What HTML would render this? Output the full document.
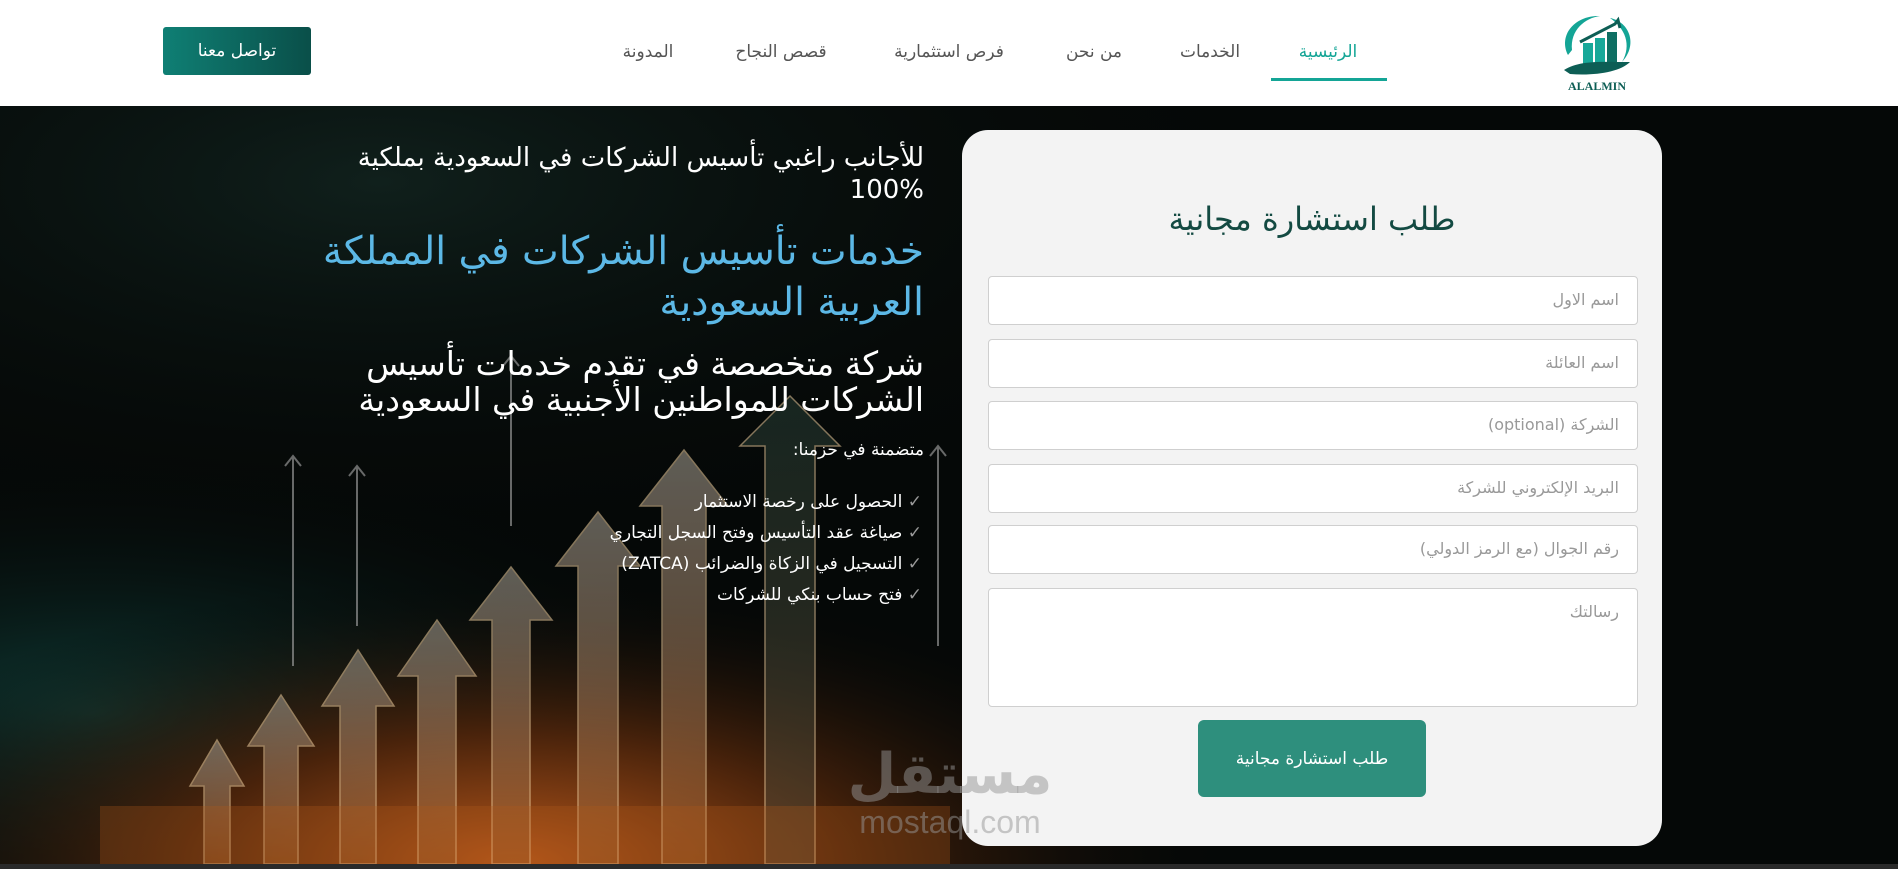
<!DOCTYPE html>
<html><head><meta charset="utf-8">
<style>
*{margin:0;padding:0;box-sizing:border-box}
body{width:1898px;height:869px;overflow:hidden;background:#fff;font-family:"DejaVu Sans","Liberation Sans",sans-serif;position:relative}
.hdr{position:absolute;left:0;top:0;width:1898px;height:106px;background:#fff}
.btn1{position:absolute;left:163px;top:27px;width:148px;height:48px;background:linear-gradient(90deg,#0f7f74,#0a4f49);color:#fff;border-radius:3px;font-size:17px;display:flex;align-items:center;justify-content:center}
.nav{position:absolute;top:42px;font-size:17px;color:#555;white-space:nowrap;transform:translateX(-50%)}
.nav.act{color:#14a596}
.ul{position:absolute;left:1271px;top:78px;width:116px;height:3px;background:#14a596}
.hero{position:absolute;left:0;top:106px;width:1898px;height:758px;overflow:hidden;background:#050807}
.bot{position:absolute;left:0;top:864px;width:1898px;height:5px;background:#2a2a2a}
.t{position:absolute;right:974px;text-align:right;direction:rtl;color:#fff;white-space:nowrap}
.card{position:absolute;left:962px;top:130px;width:700px;height:716px;background:#f3f3f3;border-radius:26px}
.card h2{position:absolute;left:0;right:0;top:70px;text-align:center;font-weight:normal;font-size:32px;color:#134a42;direction:rtl}
.in{position:absolute;left:26px;width:650px;height:49px;background:#fff;border:1px solid #cfcfcf;border-radius:4px;color:#999;font-size:16px;direction:rtl;text-align:right;padding:13px 18px 0 0}
.sub{position:absolute;left:236px;top:590px;width:228px;height:77px;background:#2e8f7d;border-radius:6px;color:#fff;font-size:17px;display:flex;align-items:center;justify-content:center;direction:rtl}
.wm{position:absolute;left:830px;top:745px;width:240px;text-align:center;color:rgba(150,150,150,0.5);z-index:5}
</style></head><body>
<div class="hdr">
<div class="btn1">تواصل معنا</div>
<div class="nav act" style="left:1328px">الرئيسية</div>
<div class="nav" style="left:1210px">الخدمات</div>
<div class="nav" style="left:1094px">من نحن</div>
<div class="nav" style="left:949px">فرص استثمارية</div>
<div class="nav" style="left:781px">قصص النجاح</div>
<div class="nav" style="left:648px">المدونة</div>
<div class="ul"></div>
<svg style="position:absolute;left:1550px;top:10px" width="95" height="84" viewBox="0 0 95 84">
<path d="M18 45 C8 25 25 5 50 6 C35 8 20 20 22 40 Z" fill="#14a596"/>
<path d="M60 8 C80 12 88 35 72 52 C82 35 75 18 60 8Z" fill="#14a596"/>
<rect x="33" y="33" width="10" height="22" fill="#17a899"/><rect x="45" y="28" width="10" height="27" fill="#17a899"/><rect x="57" y="22" width="10" height="33" fill="#0e6f63"/>
<path d="M30 32 L65 14 L68 10 L70 18" stroke="#0d5e55" stroke-width="3" fill="none"/>
<path d="M14 60 C30 50 50 52 80 52 C70 62 45 66 20 64Z" fill="#0d5e55"/>
<text x="47" y="80" text-anchor="middle" font-family="Liberation Serif,serif" font-weight="bold" font-size="12" fill="#0d5e55">ALALMIN</text>
</svg>
</div>
<div class="hero">
<svg width="1898" height="758" style="position:absolute;left:0;top:0">
<defs>
<radialGradient id="g1" cx="0.27" cy="1.0" r="0.38"><stop offset="0" stop-color="#b5561a"/><stop offset="0.45" stop-color="#4a230b"/><stop offset="1" stop-color="#050807" stop-opacity="0"/></radialGradient>
<radialGradient id="g2" cx="0.05" cy="0.8" r="0.35"><stop offset="0" stop-color="#0f3a35"/><stop offset="1" stop-color="#050807" stop-opacity="0"/></radialGradient>
<radialGradient id="g3" cx="0.2" cy="0.1" r="0.5"><stop offset="0" stop-color="#10201c"/><stop offset="1" stop-color="#050807" stop-opacity="0"/></radialGradient>
<linearGradient id="ar" x1="0" y1="0" x2="0" y2="1"><stop offset="0" stop-color="#a9a296"/><stop offset="1" stop-color="#9a5a28"/></linearGradient>
<linearGradient id="gr" x1="0" y1="0" x2="0" y2="1"><stop offset="0" stop-color="#263c34"/><stop offset="1" stop-color="#5a4a34"/></linearGradient>
</defs>
<rect width="1898" height="758" fill="url(#g3)"/>
<rect width="1898" height="758" fill="url(#g2)"/>
<rect width="1898" height="758" fill="url(#g1)"/>
<g opacity="0.55" stroke="#f0d0a0" stroke-width="1.5">
<path d="M740 340 L790 290 L840 340 L815 340 L815 758 L765 758 L765 340Z" fill="url(#gr)"/>
<path d="M640 400 L684 344 L728 400 L706 400 L706 758 L662 758 L662 400Z" fill="url(#ar)"/>
<path d="M556 460 L598 406 L640 460 L618 460 L618 758 L578 758 L578 460Z" fill="url(#ar)"/>
<path d="M470 514 L511 461 L552 514 L530 514 L530 758 L492 758 L492 514Z" fill="url(#ar)"/>
<path d="M398 570 L437 514 L476 570 L456 570 L456 758 L418 758 L418 570Z" fill="url(#ar)"/>
<path d="M322 600 L358 544 L394 600 L376 600 L376 758 L340 758 L340 600Z" fill="url(#ar)"/>
<path d="M248 640 L281 589 L314 640 L298 640 L298 758 L264 758 L264 640Z" fill="url(#ar)"/>
<path d="M190 680 L217 634 L244 680 L230 680 L230 758 L204 758 L204 680Z" fill="url(#ar)"/>
</g>
<g stroke="#aaa" stroke-width="2" fill="none" opacity="0.6">
<path d="M511 420 V250 M503 260 L511 250 L519 260"/>
<path d="M357 520 V360 M349 370 L357 360 L365 370"/>
<path d="M293 560 V350 M285 360 L293 350 L301 360"/>
<path d="M938 540 V340 M930 350 L938 340 L946 350"/>
</g>
<rect x="100" y="700" width="850" height="58" fill="#b0581c" opacity="0.3"/>
</svg>
<div class="t" style="top:36px;font-size:26px;line-height:32px">للأجانب راغبي تأسيس الشركات في السعودية بملكية<br>100%</div>
<div class="t" style="top:120px;font-size:39px;line-height:51px;color:#5cb8e6">خدمات تأسيس الشركات في المملكة<br>العربية السعودية</div>
<div class="t" style="top:240px;font-size:33px;line-height:36px">شركة متخصصة في تقدم خدمات تأسيس<br>الشركات للمواطنين الأجنبية في السعودية</div>
<div class="t" style="top:334px;font-size:17px">متضمنة في حزمنا:</div>
<div class="t" style="top:381px;font-size:17px;line-height:31px;right:976px">
<div><span style="color:#999">✓</span> الحصول على رخصة الاستثمار</div>
<div><span style="color:#999">✓</span> صياغة عقد التأسيس وفتح السجل التجاري</div>
<div><span style="color:#999">✓</span> التسجيل في الزكاة والضرائب (ZATCA)</div>
<div><span style="color:#999">✓</span> فتح حساب بنكي للشركات</div>
</div>
</div>
<div class="bot"></div>
<div class="card">
<h2>طلب استشارة مجانية</h2>
<div class="in" style="top:146px">اسم الاول</div>
<div class="in" style="top:209px">اسم العائلة</div>
<div class="in" style="top:271px">الشركة (optional)</div>
<div class="in" style="top:334px">البريد الإلكتروني للشركة</div>
<div class="in" style="top:395px">رقم الجوال (مع الرمز الدولي)</div>
<div class="in" style="top:458px;height:119px">رسالتك</div>
<div class="sub">طلب استشارة مجانية</div>
</div>
<div class="wm"><div style="font-size:56px;font-weight:bold;line-height:60px">مستقل</div><div style="font-family:'Liberation Sans',sans-serif;font-size:32px;line-height:34px">mostaql.com</div></div>
</body></html>
